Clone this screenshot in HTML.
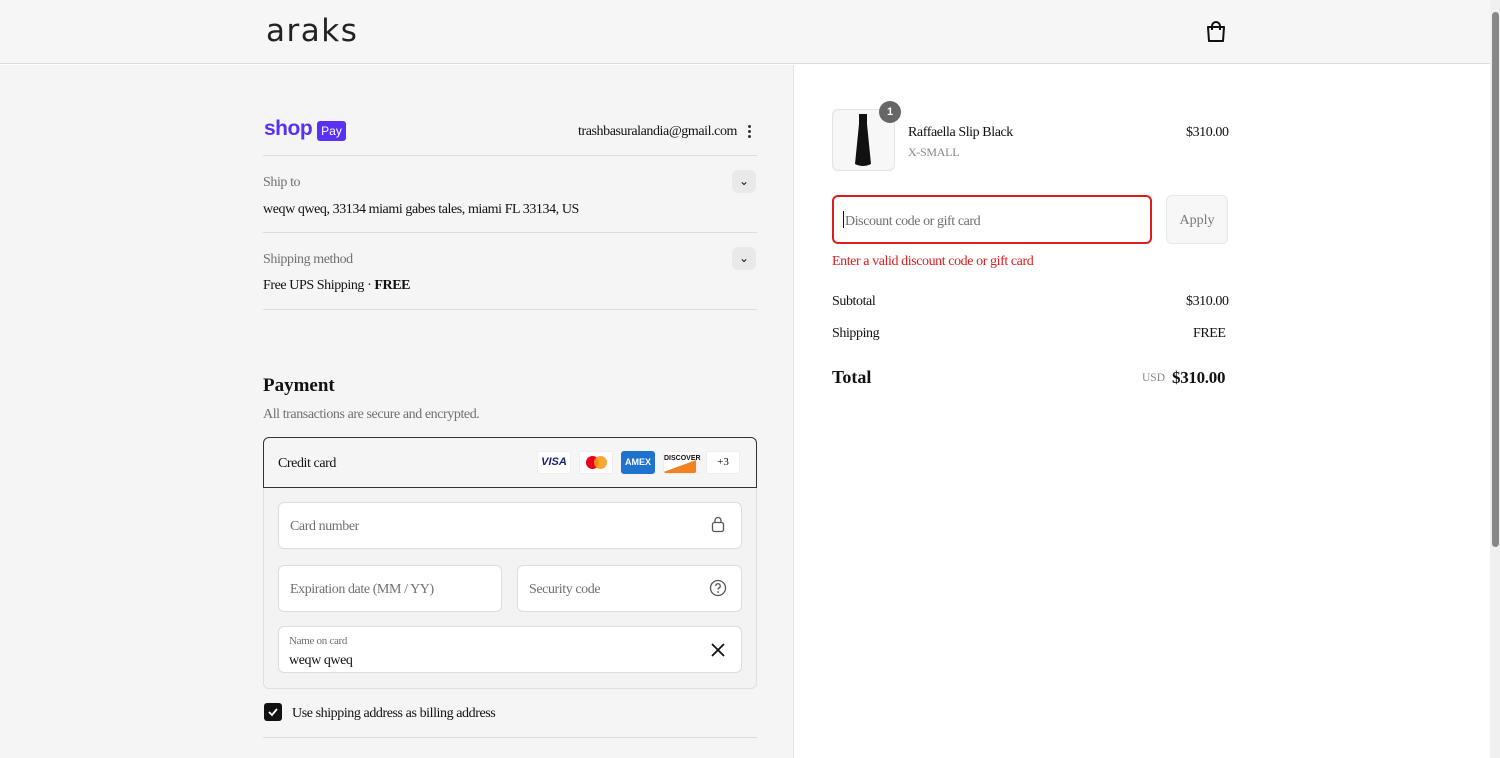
<!DOCTYPE html>
<html><head><meta charset="utf-8"><style>
*{box-sizing:border-box;margin:0;padding:0}
body{width:1500px;height:758px;overflow:hidden;background:#fff;font-family:"Liberation Serif",serif;color:#111;position:relative}
.a{position:absolute}
.s14{font-size:14px;letter-spacing:-0.42px;margin-top:2px}
.g{color:#707070}
.inp{position:absolute;background:#fff;border:1px solid #ddd;border-radius:6px}
.card{position:absolute;top:451px;width:34px;height:23px;border-radius:3px;background:#fff;border:1px solid #eee;font-family:"Liberation Sans",sans-serif;font-size:11px;font-weight:bold;text-align:center;line-height:21px}
</style></head><body>
<div class="a" style="left:0;top:0;width:1490px;height:64px;background:#f6f6f6;border-bottom:1px solid #ddd"></div>
<div class="a" style="left:266px;top:13px;font-family:'DejaVu Sans',sans-serif;font-size:31px;letter-spacing:1.5px;color:#222">araks</div>
<svg class="a" style="left:1205px;top:20px" width="22" height="23" viewBox="0 0 22 23"><path d="M3 7h16l-1 14H4z" fill="none" stroke="#111" stroke-width="2" stroke-linejoin="round"/><path d="M7 10V6a4 4 0 0 1 8 0v4" fill="none" stroke="#111" stroke-width="2"/></svg>
<div class="a" style="left:0;top:65px;width:794px;height:693px;background:#f5f5f5;border-right:1px solid #e2e2e2"></div>
<div class="a" style="left:1490px;top:0;width:10px;height:758px;background:#f0f0f0"></div>
<div class="a" style="left:1492px;top:12px;width:7px;height:535px;background:#888;border-radius:4px"></div>

<div class="a" style="left:264px;top:117px;font-family:'Liberation Sans',sans-serif;font-weight:bold;font-size:21px;color:#5a31f4;letter-spacing:-0.5px">shop</div>
<div class="a" style="left:317px;top:121px;width:29px;height:20px;background:#5a31f4;border-radius:3px;color:#fff;font-family:'Liberation Sans',sans-serif;font-size:12px;text-align:center;line-height:20px">Pay</div>
<div class="a s14" style="left:578px;top:122px">trashbasuralandia@gmail.com</div>
<div class="a" style="left:748px;top:125px;width:3px;height:3px;background:#333;border-radius:2px;box-shadow:0 5px 0 #333,0 10px 0 #333"></div>
<div class="a" style="left:263px;top:155px;width:494px;border-top:1px solid #ddd"></div>
<div class="a s14 g" style="left:263px;top:173px">Ship to</div>
<div class="a" style="left:732px;top:170px;width:24px;height:23px;background:#e9e9e9;border-radius:6px;font-size:12px;text-align:center;line-height:22px;font-family:'DejaVu Sans'">⌄</div>
<div class="a s14" style="left:263px;top:200px">weqw qweq, 33134 miami gabes tales, miami FL 33134, US</div>
<div class="a" style="left:263px;top:232px;width:494px;border-top:1px solid #ddd"></div>
<div class="a s14 g" style="left:263px;top:250px">Shipping method</div>
<div class="a" style="left:732px;top:247px;width:24px;height:23px;background:#e9e9e9;border-radius:6px;font-size:12px;text-align:center;line-height:22px;font-family:'DejaVu Sans'">⌄</div>
<div class="a s14" style="left:263px;top:276px">Free UPS Shipping · <b>FREE</b></div>
<div class="a" style="left:263px;top:309px;width:494px;border-top:1px solid #ddd"></div>

<div class="a" style="left:263px;top:375px;font-size:19px;font-weight:bold">Payment</div>
<div class="a s14 g" style="left:263px;top:405px">All transactions are secure and encrypted.</div>
<div class="a" style="left:263px;top:487px;width:494px;height:202px;background:#f3f3f3;border:1px solid #e0e0e0;border-top:none;border-radius:0 0 6px 6px"></div>
<div class="a" style="left:263px;top:437px;width:494px;height:51px;border:1px solid #333;border-radius:6px 6px 0 0;background:#f5f5f5"></div>
<div class="a s14" style="left:278px;top:454px">Credit card</div>
<div class="card" style="left:537px;color:#1a1f71;font-style:italic">VISA</div>
<div class="card" style="left:579px"><span style="display:inline-block;width:13px;height:13px;border-radius:50%;background:#eb001b;margin-top:4px"></span><span style="display:inline-block;width:13px;height:13px;border-radius:50%;background:#f79e1b;margin-left:-5px;opacity:.9"></span></div>
<div class="card" style="left:621px;background:#1f72cd;color:#fff;font-size:9px;border-color:#1f72cd">AMEX</div>
<div class="card" style="left:663px;font-size:7px;line-height:14px;background:linear-gradient(160deg,#fff 60%,#f48120 61%)">DISCOVER</div>
<div class="card" style="left:706px;font-family:'Liberation Serif';font-weight:normal">+3</div>
<div class="inp" style="left:278px;top:502px;width:464px;height:47px"></div>
<div class="a s14 g" style="left:290px;top:517px">Card number</div>
<svg class="a" style="left:711px;top:516px" width="14" height="17" viewBox="0 0 14 17"><rect x="1.5" y="6.5" width="11" height="9" rx="2" fill="none" stroke="#555" stroke-width="1.3"/><path d="M4 6.5V4.5a3 3 0 0 1 6 0v2" fill="none" stroke="#555" stroke-width="1.3"/></svg>
<div class="inp" style="left:278px;top:565px;width:224px;height:47px"></div>
<div class="a s14 g" style="left:290px;top:580px">Expiration date (MM / YY)</div>
<div class="inp" style="left:517px;top:565px;width:225px;height:47px"></div>
<div class="a s14 g" style="left:529px;top:580px">Security code</div>
<svg class="a" style="left:709px;top:579px" width="18" height="18" viewBox="0 0 18 18"><circle cx="9" cy="9" r="7.5" fill="none" stroke="#555" stroke-width="1.3"/><path d="M6.8 7a2.2 2.2 0 1 1 3 2c-.7.3-.8.8-.8 1.5" fill="none" stroke="#555" stroke-width="1.3"/><circle cx="9" cy="13" r=".9" fill="#555"/></svg>
<div class="inp" style="left:278px;top:626px;width:464px;height:47px"></div>
<div class="a g" style="left:289px;top:635px;font-size:11px;letter-spacing:-0.3px">Name on card</div>
<div class="a s14" style="left:289px;top:651px">weqw qweq</div>
<svg class="a" style="left:711px;top:643px" width="14" height="14" viewBox="0 0 14 14"><path d="M1 1l12 12M13 1L1 13" stroke="#111" stroke-width="1.8"/></svg>
<div class="a" style="left:264px;top:703px;width:18px;height:18px;background:#111;border-radius:3px"></div>
<svg class="a" style="left:267px;top:706px" width="12" height="12" viewBox="0 0 12 12"><path d="M2 6l3 3 5-6" fill="none" stroke="#fff" stroke-width="1.8"/></svg>
<div class="a s14" style="left:292px;top:704px">Use shipping address as billing address</div>
<div class="a" style="left:263px;top:737px;width:494px;border-top:1px solid #ddd"></div>

<div class="a" style="left:832px;top:109px;width:63px;height:62px;border:1px solid #e3e3e3;border-radius:6px;background:#f7f7f7"></div>
<svg class="a" style="left:852px;top:114px" width="22" height="54" viewBox="0 0 22 54"><path d="M7 0v10L3 50q8 4 16 0L15 10V0" fill="#111"/></svg>
<div class="a" style="left:879px;top:101px;width:22px;height:22px;border-radius:50%;background:#666;color:#fff;font-family:'Liberation Sans';font-size:11px;font-weight:bold;text-align:center;line-height:22px">1</div>
<div class="a s14" style="left:908px;top:123px">Raffaella Slip Black</div>
<div class="a g" style="left:908px;top:145px;font-size:12px;letter-spacing:-0.3px;color:#888">X-SMALL</div>
<div class="a s14" style="left:1186px;top:123px">$310.00</div>
<div class="a" style="left:832px;top:195px;width:320px;height:49px;border:2px solid #dd1d1d;border-radius:6px;background:#fff"></div>
<div class="a" style="left:843px;top:211px;width:1px;height:17px;background:#111"></div>
<div class="a s14 g" style="left:845px;top:212px">Discount code or gift card</div>
<div class="a" style="left:1166px;top:195px;width:62px;height:49px;border:1px solid #e8e8e8;border-radius:6px;background:#f7f7f7;font-size:14px;color:#777;text-align:center;line-height:49px">Apply</div>
<div class="a s14" style="left:832px;top:252px;color:#dd1d1d">Enter a valid discount code or gift card</div>
<div class="a s14" style="left:832px;top:292px">Subtotal</div>
<div class="a s14" style="left:1186px;top:292px">$310.00</div>
<div class="a s14" style="left:832px;top:324px">Shipping</div>
<div class="a s14" style="left:1193px;top:324px">FREE</div>
<div class="a" style="left:832px;top:367px;font-size:18px;font-weight:bold">Total</div>
<div class="a g" style="left:1142px;top:372px;font-size:11.5px;color:#888">USD</div>
<div class="a" style="left:1172px;top:368px;font-size:17px;font-weight:bold;letter-spacing:-0.3px">$310.00</div>
</body></html>
